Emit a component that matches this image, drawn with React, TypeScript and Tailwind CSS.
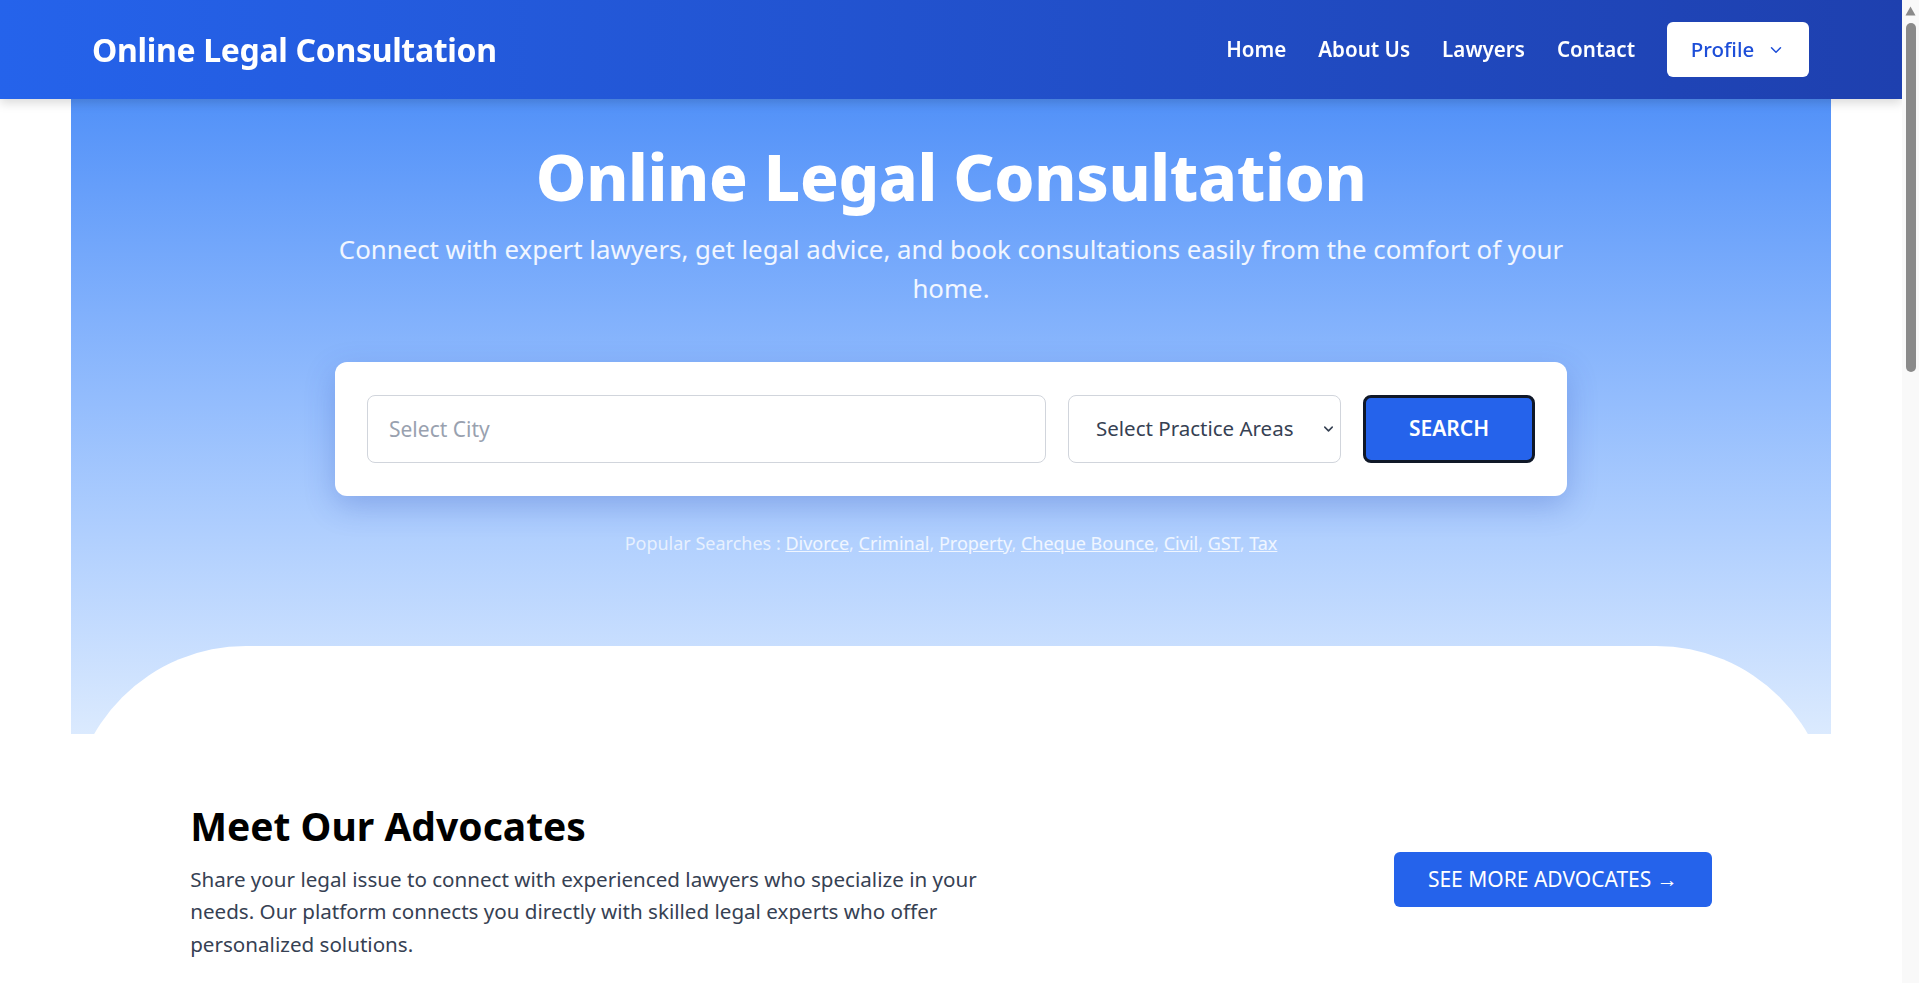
import React from "react";
import { ChevronDown } from "lucide-react";

const advocates = [
  { name: "Adv. Rohan Mehta", area: "Criminal Law", city: "Delhi", exp: "12 years" },
  { name: "Adv. Priya Sharma", area: "Family & Divorce", city: "Mumbai", exp: "9 years" },
  { name: "Adv. Arjun Nair", area: "Property Law", city: "Bengaluru", exp: "15 years" },
  { name: "Adv. Kavita Rao", area: "Cheque Bounce", city: "Hyderabad", exp: "7 years" },
  { name: "Adv. Sameer Khan", area: "Civil Litigation", city: "Pune", exp: "11 years" },
  { name: "Adv. Neha Gupta", area: "GST & Tax", city: "Chennai", exp: "8 years" },
];

function ScrollBar() {
  return (
    <div className="fixed right-0 top-0 z-50 flex h-screen w-[17px] flex-col items-center bg-[#f9f9f9]">
      <svg width="11" height="10" viewBox="0 0 11 10" className="mt-[6px]">
        <polygon points="5.5,0.5 10.5,9.5 0.5,9.5" fill="#8a8a8a" />
      </svg>
      <div className="mt-[7px] h-[349px] w-[10px] rounded-full bg-[#8a8a8a]" />
    </div>
  );
}

export default function App() {
  return (
    <div className="min-h-screen bg-white pr-[17px] font-['Noto_Sans',sans-serif] text-gray-900">
      <ScrollBar />
      {/* Navbar */}
      <header className="fixed left-0 right-[17px] top-0 z-40 h-[99px] bg-gradient-to-r from-[#2563eb] to-[#1e40af] shadow-[0_4px_10px_rgba(0,0,0,0.15)]">
        <div className="flex h-full items-center justify-between pl-[92px] pr-[93px]">
          <div className="text-[32px] font-bold tracking-[-0.01em] text-white">Online Legal Consultation</div>
          <nav className="flex items-center gap-8">
            <a className="text-[20.6px] font-semibold text-white">Home</a>
            <a className="text-[20.6px] font-semibold text-white">About Us</a>
            <a className="text-[20.6px] font-semibold text-white">Lawyers</a>
            <a className="text-[20.6px] font-semibold text-white">Contact</a>
            <button className="flex h-[55px] w-[142px] items-center justify-center gap-[13px] rounded-md bg-white text-[20.5px] font-medium text-[#1d4ed8]">
              Profile
              <ChevronDown size={18} strokeWidth={2} />
            </button>
          </nav>
        </div>
      </header>

      {/* Hero */}
      <section className="relative mx-auto flex h-[734px] w-[1760px] flex-col items-center overflow-hidden bg-gradient-to-b from-[#3b82f6] to-[#dbeafe] pt-[139px]">
        <h1 className="text-[64px] font-extrabold leading-[1.2] tracking-[-0.005em] text-white">Online Legal Consultation</h1>
        <p className="mt-[14px] w-[70%] text-center text-[25.8px] leading-[39px] text-white/90">
          Connect with expert lawyers, get legal advice, and book consultations easily from the comfort of your home.
        </p>
        <div className="mt-[54px] flex w-[70%] items-center gap-[22px] rounded-xl bg-white px-8 py-[33px] shadow-[0_10px_30px_rgba(30,64,175,0.25)]">
          <input
            placeholder="Select City"
            className="h-[68px] flex-1 rounded-lg border border-gray-300 px-[21px] text-[21px] text-gray-800 outline-none placeholder:text-gray-400"
          />
          <div className="relative w-[273px]">
            <select className="h-[68px] w-full appearance-none rounded-lg border border-gray-300 bg-white pl-[27px] pr-8 text-[20.5px] text-gray-700 outline-none">
              <option>Select Practice Areas</option>
              <option>Divorce</option>
              <option>Criminal</option>
              <option>Property</option>
            </select>
            <ChevronDown size={15} strokeWidth={2.5} className="pointer-events-none absolute right-[5px] top-1/2 -translate-y-1/2 text-gray-700" />
          </div>
          <button className="h-[68px] w-[172px] rounded-lg border-[3px] border-gray-900 bg-[#2563eb] text-[21px] font-semibold text-white">
            SEARCH
          </button>
        </div>
        <p className="mt-[34px] text-[18px] leading-[27px] text-white/70">
          Popular Searches :{" "}
          <a className="text-white/80 underline">Divorce</a>, <a className="text-white/80 underline">Criminal</a>,{" "}
          <a className="text-white/80 underline">Property</a>, <a className="text-white/80 underline">Cheque Bounce</a>,{" "}
          <a className="text-white/80 underline">Civil</a>, <a className="text-white/80 underline">GST</a>,{" "}
          <a className="text-white/80 underline">Tax</a>
        </p>
        <div className="-mb-[112px] mt-auto h-[200px] w-full shrink-0 rounded-t-[175px] bg-white" />
      </section>

      {/* Meet Our Advocates */}
      <section className="mx-auto flex w-[80%] items-center justify-between pt-[68px]">
        <div className="max-w-[810px]">
          <h2 className="text-[39px] font-bold leading-[1.25] text-black">Meet Our Advocates</h2>
          <p className="mt-[12px] text-[20.6px] leading-[32.5px] text-gray-700">
            Share your legal issue to connect with experienced lawyers who specialize in your needs. Our platform connects you directly with skilled legal experts who offer personalized solutions.
          </p>
        </div>
        <button className="-mt-[3px] h-[55px] rounded-md bg-[#2563eb] px-[34px] text-[21px] text-white">
          SEE MORE ADVOCATES →
        </button>
      </section>

      <section className="mx-auto mt-16 grid w-[80%] grid-cols-3 gap-8">
        {advocates.map((a) => (
          <div key={a.name} className="rounded-xl border border-gray-200 p-6 shadow-md">
            <div className="flex items-center gap-4">
              <div className="flex h-16 w-16 items-center justify-center rounded-full bg-blue-100 text-xl font-bold text-blue-700">
                {a.name.split(" ")[1][0]}
                {a.name.split(" ")[2][0]}
              </div>
              <div>
                <div className="text-xl font-semibold">{a.name}</div>
                <div className="text-gray-600">{a.area}</div>
              </div>
            </div>
            <div className="mt-4 flex justify-between text-gray-600">
              <span>{a.city}</span>
              <span>{a.exp}</span>
            </div>
            <button className="mt-6 h-11 w-full rounded-md bg-[#2563eb] text-white">Book Consultation</button>
          </div>
        ))}
      </section>

      <section className="mx-auto mt-24 w-[80%] rounded-2xl bg-blue-50 p-12">
        <h2 className="text-3xl font-bold">How It Works</h2>
        <div className="mt-8 grid grid-cols-3 gap-8">
          {["Search for a lawyer", "Book a consultation", "Get legal advice"].map((t, i) => (
            <div key={t} className="rounded-xl bg-white p-8 shadow">
              <div className="text-4xl font-extrabold text-[#2563eb]">{i + 1}</div>
              <div className="mt-3 text-xl font-semibold">{t}</div>
              <p className="mt-2 text-gray-600">Simple, quick and secure process from the comfort of your home.</p>
            </div>
          ))}
        </div>
      </section>

      <footer className="mt-24 bg-gray-900 py-16 text-center text-gray-300">
        <div className="text-2xl font-bold text-white">Online Legal Consultation</div>
        <p className="mt-3">© 2024 Online Legal Consultation. All rights reserved.</p>
      </footer>
    </div>
  );
}
